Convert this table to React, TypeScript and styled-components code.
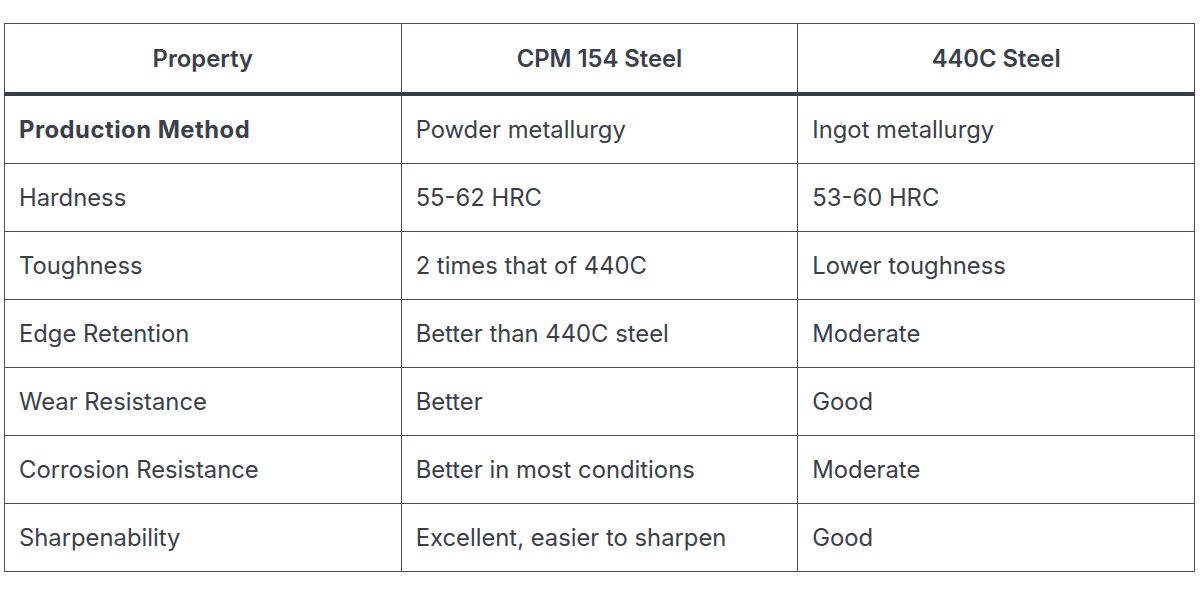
import { FC } from "react";
import styled, { createGlobalStyle } from "styled-components";

const rows: [string, string, string][] = [
  ["Production Method", "Powder metallurgy", "Ingot metallurgy"],
  ["Hardness", "55-62 HRC", "53-60 HRC"],
  ["Toughness", "2 times that of 440C", "Lower toughness"],
  ["Edge Retention", "Better than 440C steel", "Moderate"],
  ["Wear Resistance", "Better", "Good"],
  ["Corrosion Resistance", "Better in most conditions", "Moderate"],
  ["Sharpenability", "Excellent, easier to sharpen", "Good"],
];

const App: FC = () => {
  return (
    <>
      <GlobalStyle />
      <StyledPage>
        <StyledTable>
          <thead>
            <tr>
              <StyledHeadCell>Property</StyledHeadCell>
              <StyledHeadCell>CPM 154 Steel</StyledHeadCell>
              <StyledHeadCell>440C Steel</StyledHeadCell>
            </tr>
          </thead>
          <tbody>
            {rows.map((row, i) => (
              <tr key={row[0]}>
                {row.map((cell, j) => (
                  <StyledCell key={j} $bold={i === 0 && j === 0}>
                    {cell}
                  </StyledCell>
                ))}
              </tr>
            ))}
          </tbody>
        </StyledTable>
      </StyledPage>
    </>
  );
};

const GlobalStyle = createGlobalStyle`
  body {
    margin: 0;
    background: #ffffff;
    font-family: Inter, "Noto Sans", sans-serif;
  }
`;

const StyledPage = styled.div`
  padding: 23px 5px 0 4px;
`;

const StyledTable = styled.table`
  width: 1191px;
  border-collapse: collapse;
  table-layout: fixed;
  border: 1px solid #4b4f5c;
  color: #3a3f4b;
  font-size: 23.8px;
`;

const StyledHeadCell = styled.th`
  height: 68px;
  padding: 0 14px;
  font-weight: 600;
  text-align: center;
  border: 1px solid #4b4f5c;
  border-bottom: 4px solid #343d4b;
`;

const StyledCell = styled.td<{ $bold?: boolean }>`
  height: 67px;
  padding: 0 14px;
  font-weight: ${(p) => (p.$bold ? 700 : 400)};
  letter-spacing: ${(p) => (p.$bold ? "0.5px" : "normal")};
  border: 1px solid #4b4f5c;
`;

export default App;
